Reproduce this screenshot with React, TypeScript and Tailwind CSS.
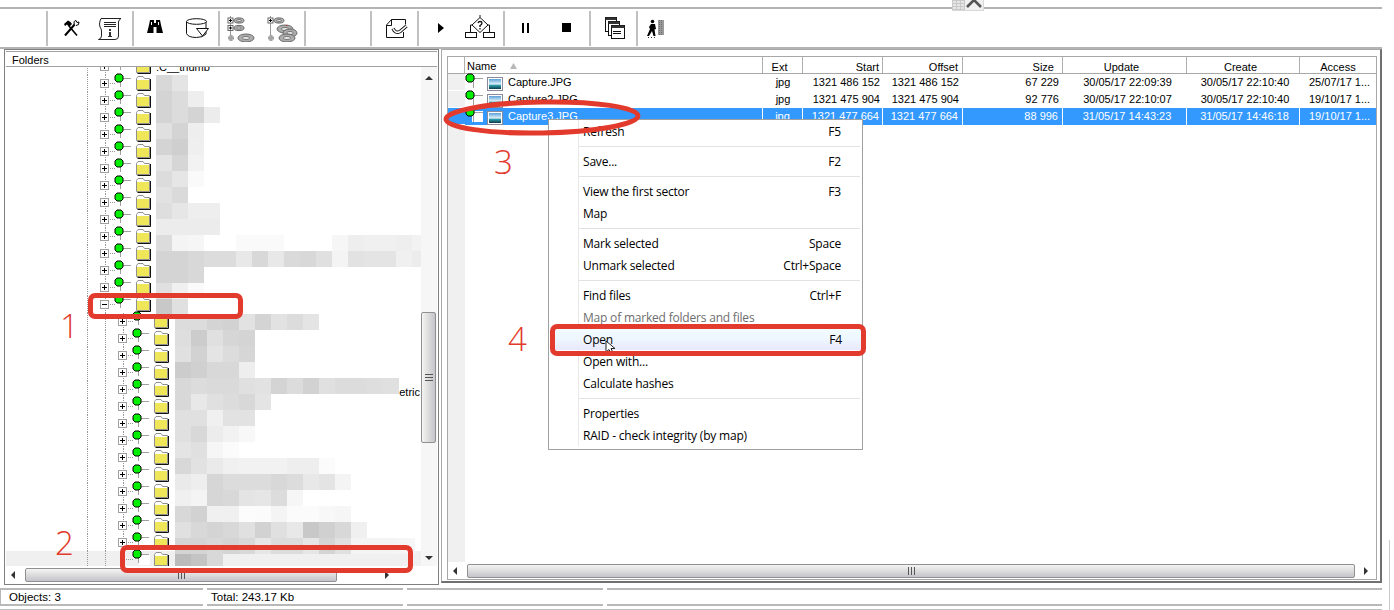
import React from "react";

const F = { fontFamily: '"Liberation Sans", Arial, sans-serif' };

function Ico({ children, w = 28 }: { children: React.ReactNode; w?: number }) {
  return (
    <svg width={w} height={28} viewBox={`0 0 ${w} 28`} className="shrink-0 block">
      {children}
    </svg>
  );
}

const Tools = () => (
  <Ico>
    <path d="M8 21.5 L18 10" stroke="#000" strokeWidth="2" fill="none" />
    <path d="M17.5 10.5 Q16 7 19 6.5 L20 8.5 L22 8 Q22.5 11.5 19 11.5" stroke="#000" strokeWidth="1" fill="#fff" />
    <path d="M20 21.5 L12 12" stroke="#000" strokeWidth="1.6" fill="none" />
    <path d="M7 10 L11 6.5 L13.5 8 L15 10 L12 13 L10 10.5 L8 12 Z" fill="#000" />
  </Ico>
);
const Scroll = () => (
  <Ico>
    <path d="M6 4.5 H26 Q23.5 6 23.5 8 V22 Q23.5 25.5 20 25.5 H3.5 Q6.5 24.5 6.5 22 V17 Q6.5 15 5 13 Q4 10 5 7 Z" fill="#fff" stroke="#222" strokeWidth="1" />
    <path d="M9 8.5 H21 M9 10.5 H21 M9 12.5 H21" stroke="#222" strokeWidth="1" />
    <rect x="14" y="15" width="2" height="2" fill="#333" />
    <rect x="14" y="18" width="2" height="4" fill="#333" />
    <rect x="13" y="22" width="4" height="1" fill="#333" />
  </Ico>
);
const Binoc = () => (
  <Ico>
    <path d="M9 6 H13 V9 H15 V6 H19 L20 11 L22 19 H15.5 V13 H12.5 V19 H6 L8 11 Z" fill="#000" />
    <rect x="10" y="8" width="1" height="3" fill="#fff" />
    <rect x="17" y="8" width="1" height="3" fill="#fff" />
  </Ico>
);
const Cyl = () => (
  <Ico>
    <path d="M3.5 7.5 V19.5 Q5 23.5 13.5 23.5 Q20 23.5 23 20 V7.5" fill="#fff" stroke="#111" strokeWidth="1" />
    <ellipse cx="13.5" cy="7.5" rx="10" ry="2.8" fill="#fff" stroke="#111" strokeWidth="1" />
    <path d="M13.5 14.5 H25.5 L19.5 22 Z" fill="#fff" stroke="#111" strokeWidth="1" />
  </Ico>
);
const Disc = ({ x, y, rx, ry }: { x: number; y: number; rx: number; ry: number }) => (
  <g>
    <ellipse cx={x} cy={y} rx={rx} ry={ry} fill="#acacac" stroke="#6a6a6a" strokeWidth="1" />
    <ellipse cx={x} cy={y} rx={rx * 0.45} ry={ry * 0.4} fill="#e4e4e4" stroke="#6a6a6a" strokeWidth="0.8" />
  </g>
);
const SmallBox = ({ x, y }: { x: number; y: number }) => (
  <g>
    <rect x={x - 2.5} y={y - 2.5} width="5" height="5" fill="#fff" stroke="#666" strokeWidth="1" />
    <path d={`M${x - 1.5} ${y} H${x + 1.5} M${x} ${y - 1.5} V${y + 1.5}`} stroke="#000" strokeWidth="1" />
  </g>
);
const Tree1 = () => (
  <Ico w={34}>
    <path d="M5.5 2 V22" stroke="#999" strokeWidth="1" />
    <path d="M5.5 6.5 H10 M5.5 14 H10" stroke="#999" strokeWidth="1" />
    <SmallBox x={5.5} y={6.5} />
    <SmallBox x={5.5} y={14} />
    <Disc x={14} y={6.5} rx={5} ry={2.6} />
    <Disc x={14} y={14} rx={5} ry={2.6} />
    <path d="M6 21 V27 M3 24 H9" stroke="#a4a4a4" strokeWidth="3" />
    <Disc x={21} y={24} rx={8} ry={4} />
  </Ico>
);
const Tree2 = () => (
  <Ico w={34}>
    <path d="M5.5 2 V22" stroke="#999" strokeWidth="1" />
    <path d="M5.5 6.5 H10" stroke="#999" strokeWidth="1" />
    <SmallBox x={5.5} y={6.5} />
    <Disc x={14} y={6.5} rx={5} ry={2.6} />
    <path d="M6 21 V27 M3 24 H9" stroke="#a4a4a4" strokeWidth="3" />
    <Disc x={20} y={15} rx={8} ry={4} />
    <Disc x={25} y={19} rx={7} ry={4} />
    <Disc x={22} y={24} rx={8} ry={4} />
    <rect x="21" y="11" width="1.5" height="1" fill="#b33" />
  </Ico>
);
const DocCheck = () => (
  <Ico>
    <path d="M24.5 10.5 V5.5 H10.5 L5.5 11 V23.5 H22.5 V18" fill="none" stroke="#111" strokeWidth="1" />
    <path d="M10.5 5.5 V11.5 H5.5" fill="none" stroke="#111" strokeWidth="1" />
    <path d="M12 14.5 Q14.5 20 19 17.5 L25.5 12" fill="none" stroke="#111" strokeWidth="3.4" />
    <path d="M12 14.5 Q14.5 20 19 17.5 L25.5 12" fill="none" stroke="#fff" strokeWidth="1.6" />
  </Ico>
);
const Play = () => (
  <Ico>
    <path d="M11 9 L17 14 L11 19 Z" fill="#000" />
  </Ico>
);
const Flow = () => (
  <Ico w={32}>
    <path d="M16 3.5 L24 11 L16 18.5 L8 11 Z M16 1 V3.5" fill="#fff" stroke="#111" strokeWidth="1" />
    <path d="M14 9 Q14.5 7.5 16 7.5 Q18 7.5 18 9 Q18 10.5 16 11.5 V13 M16 14 V15.5" fill="none" stroke="#111" strokeWidth="1.3" />
    <path d="M8 11 H6.5 V18 M24 11 H25.5 V18" stroke="#111" strokeWidth="1" fill="none" />
    <rect x="1.5" y="18.5" width="11" height="5" fill="#fff" stroke="#111" strokeWidth="1" />
    <rect x="19.5" y="18.5" width="11" height="5" fill="#fff" stroke="#111" strokeWidth="1" />
  </Ico>
);
const Pause = () => (
  <Ico>
    <rect x="9" y="9" width="2" height="10" fill="#000" />
    <rect x="14" y="9" width="2" height="10" fill="#000" />
  </Ico>
);
const Stop = () => (
  <Ico>
    <rect x="9" y="9" width="9" height="9" fill="#000" />
  </Ico>
);
const Win = ({ x, y, w, h }: { x: number; y: number; w: number; h: number }) => (
  <g>
    <rect x={x + 0.5} y={y + 0.5} width={w} height={h} fill="#fff" stroke="#111" />
    <rect x={x + 0.5} y={y + 0.5} width={w} height={2.5} fill="#333" />
  </g>
);
const Windows = () => (
  <Ico>
    <Win x={5} y={3} w={11} h={14} />
    <Win x={8} y={7} w={11} h={14} />
    <Win x={11} y={11} w={13} h={13} />
    <path d="M13 17.5 H21 M13 19.5 H21" stroke="#111" strokeWidth="1" />
  </Ico>
);
const Walker = () => (
  <Ico>
    <circle cx="9.5" cy="7.5" r="1.8" fill="#000" />
    <path d="M8 10 H12 L13 15 L11.5 15.5 L12.5 22 H10.5 L9 17 L6 22 H4 L7 15 L6 13 Z" fill="#000" />
    <path d="M5 23.5 H6 M8 23.5 H9 M11 23.5 H12" stroke="#333" strokeWidth="1" />
    <rect x="15" y="6" width="6" height="15" fill="#9a9a9a" />
    <path d="M16.5 6 V21 M18.5 6 V21" stroke="#6c6c6c" strokeWidth="1" strokeDasharray="1 1" />
  </Ico>
);

function Group({ w, gap, children }: { w: string; gap?: string; children?: React.ReactNode }) {
  return (
    <div className={`${w} ${gap ?? ""} h-[35px] flex items-center justify-center shrink-0 border-l-2 border-[#c0c0c0]`}>
      {children}
    </div>
  );
}

function Toolbar() {
  return (
    <div className="w-[1382px] h-[42px] border-t-2 border-b-2 border-[#b4b4b4] flex items-center pl-[46px]">
      <Group w="w-[86px]" gap="gap-[10px]">
        <Tools />
        <Scroll />
      </Group>
      <Group w="w-[86px]" gap="gap-[14px]">
        <Binoc />
        <Cyl />
      </Group>
      <Group w="w-[86px]" gap="gap-[6px]">
        <Tree1 />
        <Tree2 />
      </Group>
      <Group w="w-[66px]" />
      <Group w="w-[47px]">
        <DocCheck />
      </Group>
      <Group w="w-[86px]" gap="gap-[9px]">
        <Play />
        <Flow />
      </Group>
      <Group w="w-[86px]" gap="gap-[12px]">
        <Pause />
        <Stop />
      </Group>
      <Group w="w-[47px]">
        <Windows />
      </Group>
      <Group w="w-[40px]">
        <Walker />
      </Group>
    </div>
  );
}

const Dot = ({ x, y }: { x: number; y: number }) => (
  <path
    d={`M${x - 2} ${y - 4} H${x + 2} L${x + 4} ${y - 2} V${y + 2} L${x + 2} ${y + 4} H${x - 2} L${x - 4} ${y + 2} V${y - 2} Z`}
    fill="#00f000"
    stroke="#000"
    strokeWidth="1"
  />
);

const Folder = ({ x }: { x: number }) => (
  <g>
    <path d={`M${x + 0.5} 3.5 L${x + 2} 1.5 H${x + 7} L${x + 8.5} 3.5 H${x + 13.5} V14.5 H${x + 0.5} Z`} fill="#fff" stroke="#909090" strokeWidth="1" />
    <rect x={x + 1} y={5} width="12" height="9" fill="#f0e65a" />
    <path d={`M${x + 14.5} 4 V15.5 H${x + 1.5}`} stroke="#111" strokeWidth="1" fill="none" />
  </g>
);

function TreeRow({ level, kind, selected }: { level: 1 | 2; kind: "plus" | "minus" | "none"; selected?: boolean }) {
  const bx = level === 1 ? 20 : 38;
  const dotX = level === 1 ? 39 : 57;
  const lineX = dotX + 2;
  const folderX = level === 1 ? 56 : 74;
  return (
    <div className={`h-[17px] flex pl-[74px] shrink-0 ${selected ? "bg-[#f0f0f0]" : ""}`}>
      <svg width={100} height={17} viewBox="0 0 100 17" className="overflow-visible shrink-0 block">
        <path d="M7.5 0 V17" stroke="#999" strokeDasharray="1 1" />
        <path d="M25.5 0 V17" stroke="#999" strokeDasharray="1 1" />
        {level === 2 && kind !== "none" && <path d="M43.5 0 V17" stroke="#999" strokeDasharray="1 1" />}
        {kind !== "none" ? (
          <g>
            <rect x={bx + 0.5} y={4.5} width="8" height="8" fill="#fff" stroke="#a0a0a0" />
            <path d={`M${bx + 2} 8.5 H${bx + 7}`} stroke="#000" />
            {kind === "plus" && <path d={`M${bx + 4.5} 6 V11`} stroke="#000" />}
            <path d={`M${bx + 10} 8.5 H${bx + 15}`} stroke="#999" strokeDasharray="1 1" />
          </g>
        ) : (
          <path d="M46 8.5 H53" stroke="#999" strokeDasharray="1 1" />
        )}
        {selected && <rect x={59} y={3} width="11" height="11" fill="#fff" />}
        <path d={`M${lineX - 0.5} 3 V12 M${lineX} 3.5 H${dotX + 12}`} stroke="#a0a0a0" fill="none" />
        <Dot x={dotX} y={3} />
        <Folder x={folderX} />
      </svg>
    </div>
  );
}

const mosaicA = [
  "d8 e4",
  "d4 dc ee",
  "d4 dc d4 ec",
  "e0 d4 ee",
  "d4 cf ef",
  "e4 d6 f2",
  "dc e6 fa",
  "e2 da",
  "de e6 ee ee",
  "ec ec ec ec",
  "dc f4 f6 ff ff fa fa fa ff ff ff f6 ee f0 f0 ee f2",
  "d4 d4 d8 dc dc e8 d8 e8 da d8 e0 f4 e2 e4 e4 f0 ec",
  "d4 d4 d8",
  "e0 f0 fa",
  "c8 e0",
];
const mosaicB = [
  "dc dc d4 d2 e2 d4 e2 dc e4",
  "de cc e0 d6 d4",
  "e0 d2 e4 dc d6",
  "cc d0 d8 d8 ee",
  "d8 dc da da e0 e2 d4 dc d2 e0 dc dc de e0",
  "d8 e8 e0 dc d8 e4",
  "e0 e0 f0 e2 e2",
  "e0 d8 ec f2 f8",
  "e4 e0 f6 fb",
  "d8 e2 ea f0 f2 f2 f2 ee ee fb",
  "ea ee d6 dc dc dc d8 dc e8 e4 f4",
  "f0 f4 d6 d8 e4 e6 dc f6",
  "d8 d2 f0 f0 fc fb f4 fb fb f8 f6",
  "e0 d8 d4 d8 e0 d2 e0 e8 c8 d0 d8 f0",
  "d4 d4 d8 d4 d8 e6 dc dc e6 d4 e0 f4 f4 f4 f6",
  "bb c4 d8",
];

function Mosaic({ rows, pos }: { rows: string[]; pos: string }) {
  return (
    <div className={`absolute ${pos} flex flex-col`}>
      {rows.map((r, i) => (
        <div key={i} className="flex h-4">
          {r.split(" ").map((c, j) => (
            <div key={j} className="w-4 h-4" style={{ background: `#${c}${c}${c}` }} />
          ))}
        </div>
      ))}
    </div>
  );
}

function ArrowIcon({ dir }: { dir: "l" | "r" | "u" | "d" }) {
  const d = { l: "M6 1 L2 5 L6 9 Z", r: "M3 1 L7 5 L3 9 Z", u: "M1 7 L5 3 L9 7 Z", d: "M1 3 L5 7 L9 3 Z" }[dir];
  return (
    <svg width="10" height="10" viewBox="0 0 10 10" className="block shrink-0">
      <path d={d} fill="#333" />
    </svg>
  );
}

function HScroll({ track, thumb }: { track: string; thumb: string }) {
  return (
    <div className={`${track} flex items-center shrink-0`}>
      <div className="w-[16px] flex justify-center shrink-0">
        <ArrowIcon dir="l" />
      </div>
      <div className={`${thumb} h-[14px] border border-[#909090] rounded-[2px] bg-linear-to-b from-[#f4f4f4] via-[#dcdcdc] to-[#c4c4cc] flex items-center justify-center shrink-0`}>
        <div className="w-[7px] h-[8px] border-x border-[#555] flex justify-center">
          <div className="w-px h-full bg-[#555]" />
        </div>
      </div>
      <div className="flex-1 flex justify-center">
        <ArrowIcon dir="r" />
      </div>
    </div>
  );
}

function LeftPanel() {
  return (
    <div className="w-[435px] h-full border border-[#808080] p-px flex flex-col shrink-0">
      <div className="flex-1 border-t border-[#a0a0a0] flex flex-col min-h-0">
        <div className="h-[15px] border-b border-[#a0a0a0] pl-[6px] text-[11px] leading-[17px] text-black shrink-0">Folders</div>
        <div className="flex-1 flex min-h-0">
          <div className="relative w-[415px] overflow-hidden">
            <div className="-mt-[9px] flex flex-col">
              <div className="absolute left-[150px] top-[-6px] text-[11px] leading-[13px] text-black">.C__thumb</div>
              {Array.from({ length: 14 }).map((_, i) => (
                <TreeRow key={i} level={1} kind="plus" />
              ))}
              <TreeRow level={1} kind="minus" />
              {Array.from({ length: 14 }).map((_, i) => (
                <TreeRow key={i} level={2} kind="plus" />
              ))}
              <TreeRow level={2} kind="none" selected />
            </div>
            <div className="absolute right-[1px] top-[319px] text-[11px] leading-[13px] text-black">etric</div>
            <Mosaic rows={mosaicA} pos="left-[150px] top-[8px]" />
            <Mosaic rows={mosaicB} pos="left-[169px] top-[247px]" />
          </div>
          <div className="w-[16px] flex flex-col shrink-0 bg-[#f6f6f6]">
            <div className="h-[245px] flex justify-center pt-[6px] shrink-0">
              <ArrowIcon dir="u" />
            </div>
            <div className="h-[131px] w-[15px] border border-[#909090] rounded-[2px] bg-linear-to-r from-[#f4f4f4] via-[#dcdcdc] to-[#c4c4cc] flex items-center justify-center shrink-0">
              <div className="w-[8px] h-[7px] border-y border-[#555] flex items-center">
                <div className="h-px w-full bg-[#555]" />
              </div>
            </div>
            <div className="flex-1 flex items-end justify-center pb-[3px]">
              <ArrowIcon dir="d" />
            </div>
          </div>
        </div>
        <HScroll track="h-[17px] w-full" thumb="w-[312px] ml-[3px]" />
      </div>
    </div>
  );
}

const colW = ["w-[17px]", "w-[298px]", "w-[40px]", "w-[80px]", "w-[80px]", "w-[100px]", "w-[124px]", "w-[113px]", "w-[76px]"];

const files = [
  ["Capture.JPG", "jpg", "1321 486 152", "1321 486 152", "67 229", "30/05/17 22:09:39", "30/05/17 22:10:40", "25/07/17 1..."],
  ["Capture2.JPG", "jpg", "1321 475 904", "1321 475 904", "92 776", "30/05/17 22:10:07", "30/05/17 22:10:40", "19/10/17 1..."],
  ["Capture3.JPG", "jpg", "1321 477 664", "1321 477 664", "88 996", "31/05/17 14:43:23", "31/05/17 14:46:18", "19/10/17 1..."],
];

const FileIcon = () => (
  <g>
    <rect x="17.5" y="3.5" width="15" height="13" fill="#fff" stroke="#8a8a9a" />
    <defs>
      <linearGradient id="sky" x1="0" y1="0" x2="0" y2="1">
        <stop offset="0" stopColor="#5aa0d8" />
        <stop offset="0.5" stopColor="#dff0f8" />
        <stop offset="0.65" stopColor="#2a9aa8" />
        <stop offset="1" stopColor="#123a4a" />
      </linearGradient>
    </defs>
    <rect x="19" y="5" width="12" height="10" fill="url(#sky)" />
  </g>
);

function FileRow({ cells, selected }: { cells: string[]; selected?: boolean }) {
  const sep = selected ? "border-r border-white" : "";
  return (
    <div className={`flex h-[17px] leading-[17px] shrink-0 ${selected ? "bg-[#3399ff] text-white" : "text-black"}`}>
      <div className={`${colW[0]} shrink-0 border-b border-white ${selected ? "" : "bg-[#f0f0f0]"}`} />
      <div className={`${colW[1]} shrink-0 flex ${sep}`}>
        <svg width="40" height="17" viewBox="0 0 40 17" className="overflow-visible shrink-0 block">
          {selected && <rect x="7" y="3" width="11" height="11" fill="#fff" />}
          <path d="M8.5 4 V14 M8 4.5 H18" stroke="#a0a0a0" fill="none" />
          <Dot x={5} y={4} />
          <g transform="translate(5 0)">
            <FileIcon />
          </g>
        </svg>
        <span className="ml-[3px]">{cells[0]}</span>
      </div>
      <div className={`${colW[2]} shrink-0 text-center ${sep}`}>{cells[1]}</div>
      <div className={`${colW[3]} shrink-0 text-right pr-[3px] ${sep}`}>{cells[2]}</div>
      <div className={`${colW[4]} shrink-0 text-right pr-[4px] ${sep}`}>{cells[3]}</div>
      <div className={`${colW[5]} shrink-0 text-right pr-[4px] ${sep}`}>{cells[4]}</div>
      <div className={`${colW[6]} shrink-0 text-center pl-[5px] ${sep}`}>{cells[5]}</div>
      <div className={`${colW[7]} shrink-0 text-center pl-[3px] ${sep}`}>{cells[6]}</div>
      <div className={`${colW[8]} shrink-0 pl-[9px] whitespace-nowrap overflow-hidden`}>{cells[7]}</div>
    </div>
  );
}

function RightPanel() {
  const hd = "h-full border-r border-[#b0b0b0] shrink-0";
  return (
    <div className="flex-1 h-[534px] border-t border-l border-[#a8a8a8] border-r-2 border-b-2 border-r-[#707070] border-b-[#707070] pt-[6px] pl-[5px] pr-[3px] pb-[1px] min-w-0">
      <div className="w-full h-full border border-[#a8a8a8] flex flex-col">
        <div className="flex h-[17px] border-b border-[#a8a8a8] leading-[20px] text-black shrink-0">
          <div className={`${colW[0]} ${hd}`} />
          <div className={`${colW[1]} ${hd} pl-[2px] pt-[1px] flex items-center gap-[14px]`}>
            <span>Name</span>
            <svg width="7" height="6" viewBox="0 0 7 6" className="block">
              <path d="M3.5 0 L7 6 H0 Z" fill="#b8b8b8" />
            </svg>
          </div>
          <div className={`${colW[2]} ${hd} text-center pr-[6px]`}>Ext</div>
          <div className={`${colW[3]} ${hd} text-right pr-[3px]`}>Start</div>
          <div className={`${colW[4]} ${hd} text-right pr-[4px]`}>Offset</div>
          <div className={`${colW[5]} ${hd} text-right pr-[8px]`}>Size</div>
          <div className={`${colW[6]} ${hd} text-center pr-[6px]`}>Update</div>
          <div className={`${colW[7]} ${hd} text-center pr-[5px]`}>Create</div>
          <div className={`${colW[8]} shrink-0 text-center`}>Access</div>
        </div>
        <FileRow cells={files[0]} />
        <FileRow cells={files[1]} />
        <FileRow cells={files[2]} selected />
        <div className="flex-1 flex min-h-0">
          <div className={`${colW[0]} bg-[#f0f0f0]`} />
        </div>
        <HScroll track="h-[17px] w-full" thumb="w-[888px] ml-[3px]" />
      </div>
    </div>
  );
}

function Item({ label, short, disabled, active }: { label: string; short?: string; disabled?: boolean; active?: boolean }) {
  return (
    <div
      className={`h-[22px] flex items-center justify-between pr-[19px] pl-[4px] pt-px ${disabled ? "text-[#6d6d6d]" : "text-black"} ${
        active ? "bg-linear-to-b from-[#f0fdff] via-[#eef6fe] to-[#e8e8fb] -ml-[28px] pl-[32px] -mr-[1px] rounded-[2px]" : ""
      }`}
    >
      <span>{label}</span>
      {short && <span>{short}</span>}
    </div>
  );
}
const Sep = () => (
  <div className="h-[8px] flex items-center">
    <div className="h-px w-full bg-[#e2e2e2]" />
  </div>
);

function Menu() {
  return (
    <div
      className="absolute left-[548px] top-[119px] w-[315px] h-[331px] bg-white border border-[#a0a0a0] flex text-[12px]"
      style={{ fontFamily: '"Open Sans", sans-serif', letterSpacing: "-0.2px" }}
    >
      <div className="w-[30px] h-[326px] border-r border-[#e8e8e8] shrink-0" />
      <div className="flex-1 flex flex-col pr-[2px]">
        <Item label="Refresh" short="F5" />
        <Sep />
        <Item label="Save..." short="F2" />
        <Sep />
        <Item label="View the first sector" short="F3" />
        <Item label="Map" />
        <Sep />
        <Item label="Mark selected" short="Space" />
        <Item label="Unmark selected" short="Ctrl+Space" />
        <Sep />
        <Item label="Find files" short="Ctrl+F" />
        <Item label="Map of marked folders and files" disabled />
        <Item label="Open" short="F4" active />
        <Item label="Open with..." />
        <Item label="Calculate hashes" />
        <Sep />
        <Item label="Properties" />
        <Item label="RAID - check integrity (by map)" />
      </div>
    </div>
  );
}

function Num({ t, pos }: { t: string; pos: string }) {
  return (
    <div className={`absolute ${pos} text-[33px] leading-[33px] text-[#e23b2e]`} style={{ fontFamily: '"Open Sans", sans-serif', fontWeight: 300 }}>
      {t}
    </div>
  );
}

function Status() {
  const c = "h-[18px] border-y-2 border-[#b8b8b8] text-[11.5px] leading-[14px] text-black shrink-0";
  return (
    <div className="mt-[3px]">
      <div className="flex w-[1382px] gap-[4px]">
        <div className={`${c} w-[203px] pl-[8px] border-l border-l-[#b8b8b8]`}>Objects: 3</div>
        <div className={`${c} w-[196px] pl-[4px]`}>Total: 243.17 Kb</div>
        <div className={`${c} w-[196px]`} />
        <div className={`${c} flex-1`} />
      </div>
      <div className="w-[1382px] h-[2px] bg-[#c0c0c0] mt-[3px]" />
    </div>
  );
}

export default function App() {
  return (
    <div className="relative w-[1394px] h-[610px] bg-white overflow-hidden text-[11px]" style={F}>
      <div className="h-[7px]" />
      <Toolbar />
      <div className="flex w-[1382px] h-[536px] pl-[4px] gap-[2px]">
        <LeftPanel />
        <RightPanel />
      </div>
      <Status />

      <Menu />

      <div className="absolute left-[1389px] top-[540px] bottom-0 w-px bg-[#c8c8c8]" />

      <div className="absolute left-[952px] top-0 w-[32px] h-[11px] flex border-b border-[#d8d8d8]">
        <div className="w-[13px] h-full bg-[#c8c8c8] grid grid-cols-3 gap-px p-px">
          {Array.from({ length: 9 }).map((_, i) => (
            <div key={i} className="bg-[#e6e6e6]" />
          ))}
        </div>
        <div className="flex-1 bg-[#f0f0f0] border-r border-[#d8d8d8] flex justify-center">
          <svg width="16" height="8" viewBox="0 0 16 8" className="block">
            <path d="M1 7 L8 0 L15 7" stroke="#555" strokeWidth="2.6" fill="none" />
          </svg>
        </div>
      </div>

      <svg width="12" height="17" viewBox="0 0 12 17" className="absolute left-[605px] top-[340px]">
        <path d="M1 1 V12 L4 9.5 L6.5 14.5 L8.5 13.5 L6 8.5 H10 Z" fill="#fff" stroke="#222" strokeWidth="1" />
      </svg>

      <div className="absolute left-[88px] top-[293px] w-[155px] h-[26px] border-[5px] border-[#e23b2e] rounded-[7px]" />
      <div className="absolute left-[120px] top-[545px] w-[293px] h-[28px] border-[5px] border-[#e23b2e] rounded-[7px]" />
      <div className="absolute left-[550px] top-[324px] w-[316px] h-[32px] border-[5px] border-[#e23b2e] rounded-[7px]" />
      <svg width="210" height="50" viewBox="0 0 210 50" className="absolute left-[438px] top-[92px]">
        <ellipse cx="104" cy="25.5" rx="96" ry="15.5" fill="none" stroke="#e23b2e" strokeWidth="5" transform="rotate(-1 104 25.5)" />
      </svg>

      <Num t="1" pos="left-[60px] top-[309px]" />
      <Num t="2" pos="left-[55px] top-[526px]" />
      <Num t="3" pos="left-[494px] top-[145px]" />
      <Num t="4" pos="left-[508px] top-[322px]" />
    </div>
  );
}
